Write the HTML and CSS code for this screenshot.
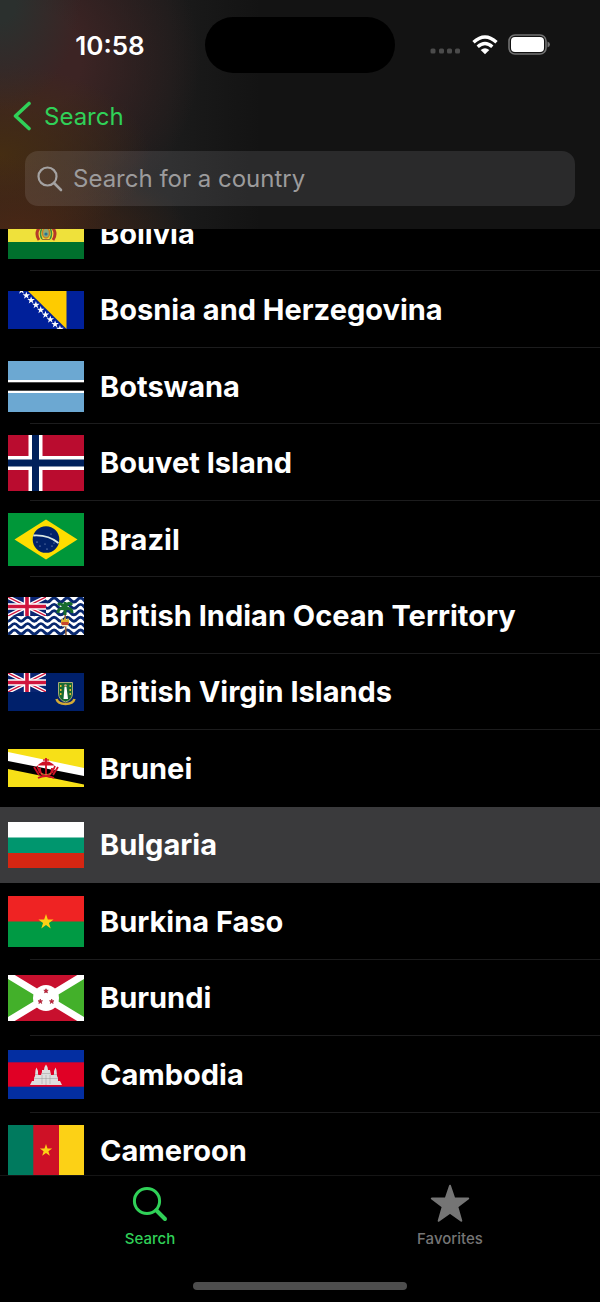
FILE: index.html
```html
<!DOCTYPE html>
<html lang="en">
<head>
<meta charset="utf-8">
<meta name="viewport" content="width=device-width, initial-scale=1">
<title>Search for a country</title>
<link rel="stylesheet" href="styles.css">
</head>
<body>
<svg class="defs" aria-hidden="true">
  <defs>
    <symbol id="union-jack" viewBox="0 0 38 19">
      <rect width="38" height="19" fill="#0a2472"/>
      <path d="M0 0 38 19M38 0 0 19" stroke="#fff" stroke-width="4"/>
      <path d="M0 0 38 19M38 0 0 19" stroke="#d0143c" stroke-width="1.3"/>
      <path d="M19 0V19M0 9.500H38" stroke="#fff" stroke-width="6.400"/>
      <path d="M19 0V19M0 9.500H38" stroke="#d0143c" stroke-width="3.600"/>
    </symbol>
    <symbol id="star" viewBox="-10 -10 20 20">
      <path d="M0-10 2.300-3.100H9.500L3.700 1.200 5.900 8.100 0 3.800-5.900 8.100-3.700 1.200-9.500-3.100H-2.300Z"/>
    </symbol>
  </defs>
</svg>
<div class="app">
  <header class="header">
    <div class="status">
      <time class="clock">10:58</time>
      <div class="island"></div>
      <div class="indicators">
        <svg class="signal" viewBox="0 0 32 6"><g fill="#4b4b4b"><rect x="0.500" y="0.500" width="5" height="5" rx="1.500"/><rect x="9" y="0.500" width="5" height="5" rx="1.500"/><rect x="17" y="0.500" width="5" height="5" rx="1.500"/><rect x="25" y="0.500" width="5" height="5" rx="1.500"/></g></svg>
        <svg class="wifi" viewBox="0 0 26 20"><g fill="none" stroke="#fff" stroke-width="3.400"><path d="M1.500 7.300Q13-3.300 24.500 7.300"/><path d="M5.700 11.700Q13 5.200 20.300 11.700"/></g><path d="M8.700 15Q13 11.600 17.300 15L13 19.300Z" fill="#fff"/></svg>
        <svg class="battery" viewBox="0 0 43 22"><rect x="1" y="1" width="37" height="19" rx="6" fill="none" stroke="#737373" stroke-width="1.600"/><rect x="3" y="3" width="33" height="15" rx="4" fill="#fff"/><path d="M39.500 7.500Q42 8.500 42 10.500T39.500 13.500Z" fill="#737373"/></svg>
      </div>
    </div>
    <nav class="nav">
      <a class="back" href="#">
        <svg class="chevron" viewBox="0 0 20 30"><path d="M17 2.500 3.500 15 17 27.500" fill="none" stroke="#30d158" stroke-width="3.600" stroke-linecap="round" stroke-linejoin="round"/></svg>
        <span>Search</span>
      </a>
    </nav>
    <div class="field">
      <label class="field-icon" for="country" aria-label="Search for a country"><svg viewBox="0 0 26 26"><circle cx="10.500" cy="10.500" r="9" fill="none" stroke="#a4a2a2" stroke-width="2.200"/><path d="M17 17 24 24" stroke="#a4a2a2" stroke-width="2.600" stroke-linecap="round"/></svg></label>
      <input class="field-input" id="country" type="text" placeholder="Search for a country">
    </div>
  </header>

  <main class="list-view">
    <ul class="list">
      <li class="item"><a class="row" href="#">
        <svg class="flag" viewBox="0 0 76 52"><rect width="76" height="52" fill="#d52b1e"/><rect y="17" width="76" height="18" fill="#efe13b"/><rect y="35" width="76" height="17" fill="#00702d"/><path d="M31 21Q27 27 31 33M45 21Q49 27 45 33" fill="none" stroke="#b63a28" stroke-width="3"/><path d="M34 21Q31 27 34 32M42 21Q45 27 42 32" fill="none" stroke="#3e8b41" stroke-width="1.500"/><ellipse cx="38" cy="26" rx="3.600" ry="5" fill="#8dab78" stroke="#d07d22" stroke-width="1.400"/><circle cx="38" cy="27" r="1.600" fill="#287294"/><path d="M34 32.500H42" stroke="#9a6d30"/></svg>
        <span class="name">Bolivia</span></a></li>
      <li class="item"><a class="row" href="#">
        <svg class="flag" viewBox="0 0 76 38"><rect width="76" height="38" fill="#00209a"/><path d="M20 0H58.500V38Z" fill="#fecb00"/><g fill="#fff"><use href="#star" x="9.500" y="-4.500" width="8" height="8"/><use href="#star" x="14.300" y=".5" width="8" height="8"/><use href="#star" x="19.100" y="5.300" width="8" height="8"/><use href="#star" x="23.900" y="10.100" width="8" height="8"/><use href="#star" x="28.700" y="14.900" width="8" height="8"/><use href="#star" x="33.500" y="19.700" width="8" height="8"/><use href="#star" x="38.300" y="24.500" width="8" height="8"/><use href="#star" x="43.100" y="29.300" width="8" height="8"/><use href="#star" x="47.900" y="34.100" width="8" height="8"/></g></svg>
        <span class="name">Bosnia and Herzegovina</span></a></li>
      <li class="item"><a class="row" href="#">
        <svg class="flag" viewBox="0 0 76 51"><rect width="76" height="51" fill="#6ca8d2"/><rect y="19" width="76" height="13" fill="#fff"/><rect y="21.300" width="76" height="8.400" fill="#000"/></svg>
        <span class="name">Botswana</span></a></li>
      <li class="item"><a class="row" href="#">
        <svg class="flag" viewBox="0 0 76 56"><rect width="76" height="56" fill="#ba0c2f"/><path d="M27.500 0V56M0 28H76" stroke="#fff" stroke-width="14"/><path d="M27.500 0V56M0 28H76" stroke="#00205b" stroke-width="7"/></svg>
        <span class="name">Bouvet Island</span></a></li>
      <li class="item"><a class="row" href="#">
        <svg class="flag" viewBox="0 0 76 53"><rect width="76" height="53" fill="#009739"/><path d="M6.500 26.500 38 6.500 69.500 26.500 38 46.500Z" fill="#fedd00"/><circle cx="38" cy="26.500" r="13.300" fill="#012169"/><path d="M25.300 22.500Q40 21.500 50.500 30" fill="none" stroke="#d9e6e4" stroke-width="1.900"/><g fill="#b9c8e4"><circle cx="29" cy="29" r=".6"/><circle cx="32" cy="33" r=".6"/><circle cx="37" cy="31" r=".5"/><circle cx="39" cy="36" r=".6"/><circle cx="44" cy="33" r=".6"/><circle cx="46" cy="30" r=".5"/><circle cx="43" cy="21" r=".5"/></g></svg>
        <span class="name">Brazil</span></a></li>
      <li class="item"><a class="row" href="#">
        <svg class="flag" viewBox="0 0 76 38"><rect width="76" height="38" fill="#fff"/><g fill="none" stroke="#08286f" stroke-width="2.900"><path id="wave" d="M-12 3Q-8.500-.5-5 3T2 3" stroke="none"/><path id="swell" d="M-6 4Q0-.5 6 4 12 5 18 4-6 4-6 4" stroke="none"/><path id="sea" d="M-10 3Q-6.700-1-3.400 3T3.200 3 9.800 3 16.400 3 23 3 29.600 3 36.200 3 42.800 3 49.400 3 56 3 62.600 3 69.200 3 75.800 3 82.400 3"/><use href="#sea" y="6.400"/><use href="#sea" y="12.800"/><use href="#sea" y="19.200"/><use href="#sea" y="25.600"/><use href="#sea" y="32"/></g><use href="#union-jack" width="38" height="19"/><path d="M57 14 58 38" stroke="#8d5c37" stroke-width="1.600"/><g fill="none" stroke="#176c2c" stroke-width="3"><path d="M57 12Q54 5 50 8M57 12Q60 3 64 8M57 12Q50 10 50 16M57 12Q64 10 64 16M57 12V5M57 12V18"/></g><path d="M53 24 54 21 55.500 23 57 20.500 58.500 23 60.500 21 61 24V27H53Z" fill="#dfb22d"/><path d="M53.500 25H60.500V28H53.500Z" fill="#c6452e"/><path d="M54 28H60V29.500H54Z" fill="#f5ebb5"/></svg>
        <span class="name">British Indian Ocean Territory</span></a></li>
      <li class="item"><a class="row" href="#">
        <svg class="flag" viewBox="0 0 76 38"><rect width="76" height="38" fill="#00206b"/><use href="#union-jack" width="38" height="19"/><path d="M50.500 9.500H64.500V20Q64.500 27 57.500 29 50.500 27 50.500 20Z" fill="#176a32" stroke="#a9ab76"/><path d="M56.500 14H58.500L60 26H55.500L56 20Z" fill="#fff"/><circle cx="57.500" cy="12.500" r="1.300" fill="#dba587"/><g fill="#e3b934"><rect x="52" y="12" width="1.500" height="2"/><rect x="52" y="16" width="1.500" height="2"/><rect x="52" y="20" width="1.500" height="2"/><rect x="61.500" y="12" width="1.500" height="2"/><rect x="61.500" y="16" width="1.500" height="2"/><rect x="61.500" y="20" width="1.500" height="2"/></g><path d="M48.500 26Q50 31 57.500 31T66.500 26" fill="none" stroke="#d5aa35" stroke-width="2.600"/></svg>
        <span class="name">British Virgin Islands</span></a></li>
      <li class="item"><a class="row" href="#">
        <svg class="flag" viewBox="0 0 76 38"><rect width="76" height="38" fill="#f7e017"/><path d="M0 3 76 19V28L0 13Z" fill="#fff"/><path d="M0 12 76 27V35.500L0 20Z" fill="#000"/><g fill="none" stroke="#cf1126" stroke-width="1.800"><path d="M38 9V27M32 15.500Q38 11 44 15.500ZM32 19Q32 27 38 27T44 19M26 18 31 26M29 17 32 24M50 18 45 26M47 17 44 24M30 29Q38 25 46 29"/><path d="M35 11H41" stroke-width="1.300"/></g><path d="M33 24.500Q38 27 43 24.500" fill="none" stroke="#e2aa3a" stroke-width=".7"/></svg>
        <span class="name">Brunei</span></a></li>
      <li class="item item-selected"><a class="row" href="#" aria-current="true">
        <svg class="flag" viewBox="0 0 76 46"><rect width="76" height="46" fill="#fff"/><rect y="15.500" width="76" height="15.500" fill="#00966e"/><rect y="31" width="76" height="15" fill="#d62612"/></svg>
        <span class="name">Bulgaria</span></a></li>
      <li class="item"><a class="row" href="#">
        <svg class="flag" viewBox="0 0 76 51"><rect width="76" height="51" fill="#ef2323"/><rect y="25.500" width="76" height="25.500" fill="#009a44"/><use href="#star" x="30" y="18" width="16" height="16" fill="#fcd116"/></svg>
        <span class="name">Burkina Faso</span></a></li>
      <li class="item"><a class="row" href="#">
        <svg class="flag" viewBox="0 0 76 46"><rect width="76" height="46" fill="#c8102e"/><path d="M0 0 38 23 0 46ZM76 0 38 23 76 46Z" fill="#43b02a"/><path d="M0 0 76 46M76 0 0 46" stroke="#fff" stroke-width="7"/><circle cx="38" cy="23" r="13" fill="#fff"/><g fill="#c8102e" stroke="#a83040" stroke-width="3"><use href="#star" x="35.500" y="13.500" width="5" height="5"/><use href="#star" x="29.800" y="24" width="5" height="5"/><use href="#star" x="41.200" y="24" width="5" height="5"/></g></svg>
        <span class="name">Burundi</span></a></li>
      <li class="item"><a class="row" href="#">
        <svg class="flag" viewBox="0 0 76 49"><rect width="76" height="49" fill="#032ea1"/><rect y="12.300" width="76" height="24.400" fill="#e00025"/><path d="M22 35 24 31H26V28L27 26 27.500 20 28.500 17.500 30 21V25H33L34 22V20H36L36.500 17 38 14.500 39.500 17 40 20H42L43 25H46V21L47.500 17.500 48.500 20 49 26 50 28V31H52L54 35Z" fill="#dedede"/><path d="M27 24.500H31M45 24.500H49M34 23.500H42M26 28.500H50M34 25V34M42 25V34M38 25V35" fill="none" stroke="#888" stroke-width=".4"/></svg>
        <span class="name">Cambodia</span></a></li>
      <li class="item"><a class="row" href="#">
        <svg class="flag" viewBox="0 0 76 51"><rect width="76" height="51" fill="#007a5e"/><rect x="25.300" width="25.700" height="51" fill="#ce1126"/><rect x="51" width="25" height="51" fill="#fcd116"/><use href="#star" x="31.500" y="19" width="13" height="13" fill="#fcd116"/></svg>
        <span class="name">Cameroon</span></a></li>
    </ul>
  </main>

  <footer class="footer">
    <nav class="tabs">
      <a class="tab tab-active" href="#">
        <svg class="tab-icon" viewBox="0 0 40 40"><circle cx="17" cy="17" r="12.600" fill="none" stroke="currentColor" stroke-width="3"/><path d="M26.500 26.500 35 35" stroke="currentColor" stroke-width="4" stroke-linecap="round"/></svg>
        <span>Search</span>
      </a>
      <a class="tab" href="#">
        <svg class="tab-icon" viewBox="0 0 40 40"><path d="M20 1.800 24.300 14.500H38.200L27.300 22.800 31.300 36.800 20 28.600 8.700 36.800 12.700 22.800 1.800 14.500H15.700Z" fill="currentColor" stroke="currentColor" stroke-width="2" stroke-linejoin="round"/></svg>
        <span>Favorites</span>
      </a>
    </nav>
    <div class="home"></div>
  </footer>
</div>
</body>
</html>
```

FILE: styles.css
```css
* {
  box-sizing: border-box;
}

body {
  margin: 0;
  background: #000;
  color: #fff;
  font-family: Inter, "Liberation Sans", sans-serif;
}

a {
  color: inherit;
  text-decoration: none;
}

svg {
  display: block;
  flex: none;
}

.defs {
  position: absolute;
  width: 0;
  height: 0;
}

.app {
  display: flex;
  flex-direction: column;
  height: 100vh;
}

.header {
  flex: none;
  padding: 17px 25px 23px;
  background:
    radial-gradient(ellipse 80px 110px at 0 0, #2b302e 20%, transparent),
    radial-gradient(ellipse 170px 80px at 20px 235px, #4c2815, transparent),
    radial-gradient(ellipse 150px 90px at 0 155px, #452d12, transparent),
    radial-gradient(ellipse 170px 170px at 30px 60px, #3c2424 30%, transparent),
    linear-gradient(90deg, #1e1c1c 0, #1b1b1b 170px, #131313 260px);
}

.status {
  display: grid;
  grid-template-columns: 1fr 190px 1fr;
  align-items: center;
}

.clock {
  justify-self: center;
  margin-left: -10px;
  font-size: 26px;
  font-weight: 600;
}

.island {
  height: 56px;
  border-radius: 28px;
  background: #000;
}

.indicators {
  display: flex;
  align-items: center;
  justify-content: flex-end;
  gap: 10px;
  padding-right: 24px;
}

.signal {
  width: 32px;
  margin-top: 12px;
}

.wifi {
  width: 26px;
}

.battery {
  width: 43px;
}

.nav {
  display: flex;
  height: 78px;
  padding-top: 8px;
  align-items: center;
}

.back {
  display: flex;
  align-items: center;
  gap: 12px;
  margin-left: -13px;
  color: #30d158;
  font-size: 24px;
}

.chevron {
  width: 20px;
}

.field {
  display: flex;
  align-items: center;
  gap: 10px;
  height: 55px;
  padding: 0 12px;
  border-radius: 13px;
  background: rgb(250 250 255 / 10%);
}

.field-icon {
  width: 26px;
}

.field-input {
  flex: 1;
  min-width: 0;
  padding: 0;
  border: 0;
  outline: 0;
  background: none;
  color: #fff;
  font: inherit;
  font-size: 24px;
}

.field-input::placeholder {
  color: #9c9b9c;
  opacity: 1;
}

.list-view {
  display: flex;
  flex: 1;
  min-height: 0;
  overflow: hidden;
}

.list {
  display: grid;
  grid-auto-rows: 1fr;
  flex: 1;
  margin: -34px 0 -14px;
  padding: 0;
  list-style: none;
}

.item {
  display: flex;
  min-height: 0;
  background: linear-gradient(#1c1c1d, #1c1c1d) 30px 100% / 100% 1px no-repeat;
}

.item:has(+ .item-selected) {
  background: none;
}

.item-selected {
  background: #3a3a3c;
}

.row {
  display: flex;
  flex: 1;
  align-items: center;
  gap: 16px;
  padding: 0 8px;
}

.flag {
  width: 76px;
  height: auto;
}

.name {
  font-size: 29px;
  font-weight: 700;
  white-space: nowrap;
}

.footer {
  flex: none;
  padding-bottom: 12px;
  border-top: 1px solid #151515;
}

.tabs {
  display: grid;
  grid-template-columns: 1fr 1fr;
  height: 106px;
}

.tab {
  display: flex;
  flex-direction: column;
  align-items: center;
  gap: 5px;
  padding-top: 8px;
  color: #757575;
  font-size: 15px;
  font-weight: 500;
}

.tab-active {
  color: #30d158;
}

.tab-icon {
  width: 40px;
}

.home {
  width: 214px;
  height: 8px;
  margin: 0 auto;
  border-radius: 4px;
  background: #4d4d4d;
}
```
